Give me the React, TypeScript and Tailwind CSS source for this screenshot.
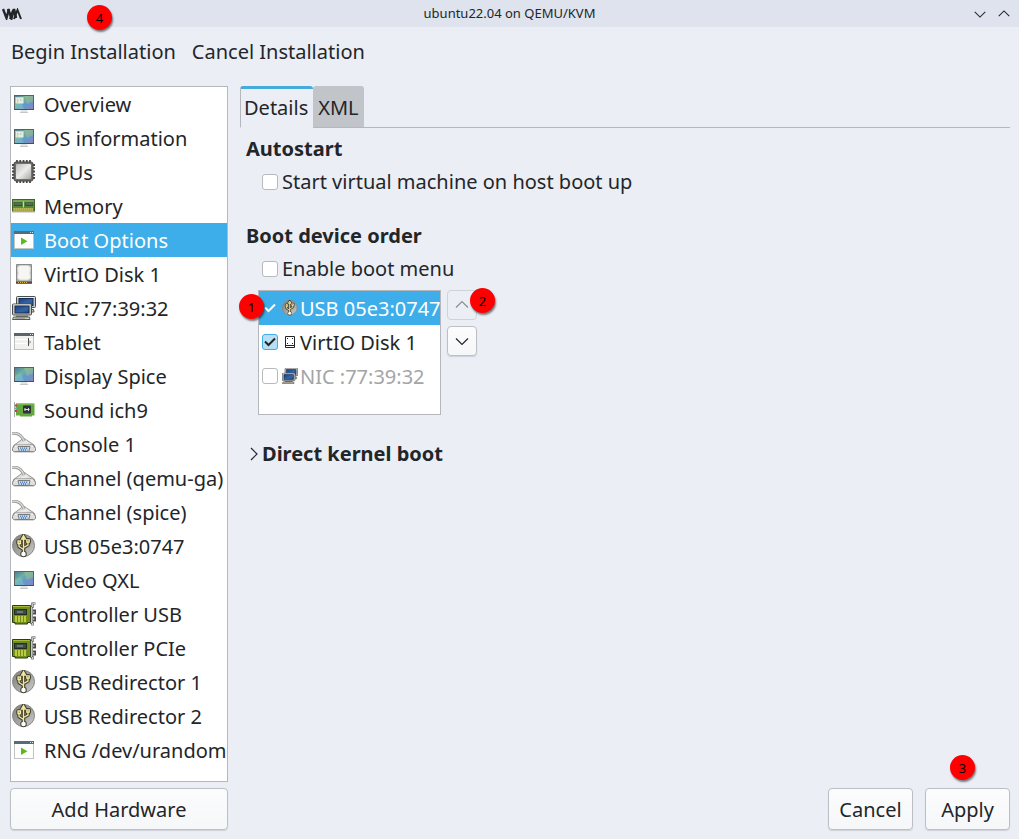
import { useState } from 'react'
import type { ReactNode } from 'react'
import clsx from 'clsx'

type IconName =
  | 'system'
  | 'cpu'
  | 'memory'
  | 'boot'
  | 'disk'
  | 'nic'
  | 'tablet'
  | 'display'
  | 'sound'
  | 'serial'
  | 'usb'
  | 'controller'

interface Hardware {
  name: string
  icon: IconName
}

const HARDWARE: Hardware[] = [
  { name: 'Overview', icon: 'system' },
  { name: 'OS information', icon: 'system' },
  { name: 'CPUs', icon: 'cpu' },
  { name: 'Memory', icon: 'memory' },
  { name: 'Boot Options', icon: 'boot' },
  { name: 'VirtIO Disk 1', icon: 'disk' },
  { name: 'NIC :77:39:32', icon: 'nic' },
  { name: 'Tablet', icon: 'tablet' },
  { name: 'Display Spice', icon: 'display' },
  { name: 'Sound ich9', icon: 'sound' },
  { name: 'Console 1', icon: 'serial' },
  { name: 'Channel (qemu-ga)', icon: 'serial' },
  { name: 'Channel (spice)', icon: 'serial' },
  { name: 'USB 05e3:0747', icon: 'usb' },
  { name: 'Video QXL', icon: 'display' },
  { name: 'Controller USB', icon: 'controller' },
  { name: 'Controller PCIe', icon: 'controller' },
  { name: 'USB Redirector 1', icon: 'usb' },
  { name: 'USB Redirector 2', icon: 'usb' },
  { name: 'RNG /dev/urandom', icon: 'boot' },
]

// Gradients shared by every icon on the page
function IconDefs() {
  return (
    <svg className="absolute size-0" aria-hidden="true">
      <defs>
        <linearGradient id="screen" x1="0" y1="0" x2="1" y2="1">
          <stop offset="0" stopColor="#4f8099" />
          <stop offset="0.35" stopColor="#6fb0a2" />
          <stop offset="0.6" stopColor="#5f9bd0" />
          <stop offset="1" stopColor="#8a87b8" />
        </linearGradient>
        <linearGradient id="silver" x1="0" y1="0" x2="1" y2="1">
          <stop offset="0" stopColor="#bdbdbb" />
          <stop offset="0.5" stopColor="#ececeb" />
          <stop offset="1" stopColor="#a8a8a6" />
        </linearGradient>
        <linearGradient id="ball" x1="0" y1="0" x2="1" y2="1">
          <stop offset="0" stopColor="#7e7e7c" />
          <stop offset="0.6" stopColor="#a9a9a7" />
          <stop offset="1" stopColor="#d2d2d0" />
        </linearGradient>
        <linearGradient id="blue" x1="0" y1="0" x2="1" y2="1">
          <stop offset="0" stopColor="#1c3f7c" />
          <stop offset="0.6" stopColor="#3465a4" />
          <stop offset="1" stopColor="#1f4584" />
        </linearGradient>
      </defs>
    </svg>
  )
}

const MONITOR = (
  <>
    <path d="M9 18h6l1 2.5H8z" fill="#e2e2e2" />
    <path d="M8 20.5h8" stroke="#c6c9c9" />
    <rect x="2" y="3" width="20" height="15" fill="#5b6264" />
    <rect x="3" y="4" width="18" height="13" fill="url(#screen)" />
    <path d="M12 4h9v5l-6 3z" fill="#a8c47c" opacity="0.5" />
    <path d="M3 12l6-3 3 8H3z" fill="#8bd0c4" opacity="0.4" />
    <path d="M2 17.5h20" stroke="#4a5052" />
  </>
)

const COMPUTER = (
  <>
    <rect x="0.5" y="0.5" width="19" height="11" rx="1" fill="#c9c8c0" stroke="#4d4e4b" />
    <path d="M1.5 1.500h17" stroke="#eeeeec" />
    <rect x="3" y="2.500" width="14" height="7" fill="url(#blue)" stroke="#152e5c" />
    <path d="M4 12h12v1.500H4z" fill="#77776f" />
    <path d="M1.500 13.500h16l.500 2.500H.5z" fill="#d3d2ca" stroke="#55564f" />
    <path d="M3 14.800h10" stroke="#85867d" strokeWidth="0.8" />
  </>
)

const TRIDENT = (
  <>
    <path d="M11.5 3v15M11.5 15.5L7 12.5V8.5M11.5 13.5l4.5-2.5V7.5" />
    <path d="M11.5 1.5l2 3.5h-4zM6 7h2.5v2.5H6zM14.8 5.8h2.4v2.4h-2.4z" />
  </>
)

const DRAWINGS: Record<IconName, ReactNode> = {
  system: (
    <>
      {MONITOR}
      <rect x="3.5" y="5" width="8" height="6.5" fill="#e8eedf" />
      <path d="M3.5 5.5h8" stroke="#c3d3cf" />
      <path d="M5 8h1.5M8 8h1.5M5 10h1" stroke="#9fb39a" />
    </>
  ),
  cpu: (
    <>
      <path
        d="M5 0v23M8.200 0v23M11.500 0v23M14.800 0v23M18 0v23M0 5h23M0 8.200h23M0 11.500h23M0 14.800h23M0 18h23"
        stroke="#4b4b49"
        strokeWidth="1.800"
      />
      <rect x="2" y="2" width="19" height="19" rx="2" fill="#6f6f6d" stroke="#464644" />
      <rect x="4" y="4" width="15" height="15" rx="1" fill="url(#silver)" />
    </>
  ),
  memory: (
    <>
      <path d="M0 18.5h23" stroke="#d9d9d6" />
      <rect x="0.5" y="5.5" width="22" height="11.5" fill="#578a3b" stroke="#3e662a" />
      <path d="M1 7h21" stroke="#9cc07c" />
      <path d="M2 8.5h8V12H2zM13 8.5h8V12h-8z" fill="#3b4a38" />
      <path d="M2.5 10h7M13.5 10h7" stroke="#87a08a" strokeWidth="0.8" />
      <path d="M11.5 7.5v6" stroke="#c5dca7" />
      <path d="M1.5 15.5h20" stroke="#e1cb65" strokeWidth="3" strokeDasharray="1.2 0.8" />
    </>
  ),
  boot: (
    <>
      <rect x="2.5" y="4.5" width="19" height="16" fill="#fff" stroke="#c2c4c4" />
      <rect x="2" y="3" width="20" height="3" fill="#526d7c" />
      <path d="M18 4.5h1M20 4.5h1" stroke="#d7e1e6" />
      <path d="M9 9.5l6.5 3.8L9 17z" fill="#5cbb1c" />
    </>
  ),
  disk: (
    <>
      <path d="M4.5 2.5h15v19h-15z" fill="#a9aaa8" stroke="#8b8c8a" />
      <path
        d="M5.500 6a3 3 0 0 1 3-2.500h7a3 3 0 0 1 3 2.500l-.5 5 .5 4.500a3 3 0 0 1-3 2.500h-7a3 3 0 0 1-3-2.500l.5-4.500z"
        fill="#f6f6f4"
        stroke="#d4d4d1"
      />
      <path d="M4 20.500h16" stroke="#484947" strokeWidth="2" />
      <path d="M6 20.500h9" stroke="#ddb64c" strokeDasharray="1 1" />
    </>
  ),
  nic: (
    <>
      <g transform="translate(4 0)">{COMPUTER}</g>
      <g transform="translate(0 7.500)">{COMPUTER}</g>
    </>
  ),
  tablet: (
    <>
      <rect x="2.5" y="4.5" width="19" height="15" fill="#f1f1f0" stroke="#bcbebe" />
      <rect x="2" y="3" width="20" height="3" fill="#5a656b" />
      <path d="M18 4.5h1M20 4.5h1" stroke="#d7e1e6" />
      <path d="M3 9.5h18M3 13.5h12" stroke="#fff" />
      <path d="M16.500 8v8" stroke="#4e5254" />
      <path d="M17.500 10l1.500 2-1.500 2" fill="#8a8d8e" />
    </>
  ),
  display: MONITOR,
  sound: (
    <>
      <path d="M2.5 4v15" stroke="#a8aaa6" />
      <path d="M4 5.5h18.500v12H20v1H8v-1H4z" fill="#64a83f" />
      <path d="M4 6h18" stroke="#84c15e" />
      <path d="M3 7.500h2M3 13h2" stroke="#d13b3b" strokeWidth="2" />
      <path d="M3 10.500h2" stroke="#4dbcb0" strokeWidth="2" />
      <rect x="11" y="7.500" width="8" height="8" rx="1" fill="#2c3532" />
      <path d="M13 10v3M16.500 10v3M12.500 11.500h5" stroke="#d5ddd8" />
    </>
  ),
  serial: (
    <>
      <path d="M9 8c1.500-2 4-2 5.500 0l7 4.500c1 .8 1.500 2 1.500 4H1c0-2 .5-3.200 2-4z" fill="url(#silver)" stroke="#989997" />
      <path d="M0 1.500c6-1.200 9.500 1.500 12 7.500" fill="none" stroke="#9b9c9a" strokeWidth="3" />
      <path d="M0 1.300c6-1.200 9.500 1.500 12 7.500" fill="none" stroke="#deded9" strokeWidth="1.200" />
      <path d="M2.500 13h19l2 3.500v1.500c0 1-.8 1.500-2 1.500h-19c-1.200 0-2-.5-2-1.500v-1.500z" fill="#dfdfdd" stroke="#828381" />
      <path d="M3 14h18" stroke="#fff" />
      <path d="M6 14.500h12l-1.200 5H7.200z" fill="#d4deea" stroke="#777b80" />
      <path d="M8 16.200h8M8.800 18h6.500" stroke="#3f73b5" strokeWidth="1.300" strokeDasharray="1.200 0.800" />
      <path d="M2 20.500h20" stroke="#d8d8d6" />
    </>
  ),
  usb: (
    <>
      <circle cx="11.5" cy="11.5" r="11" fill="url(#ball)" stroke="#858583" />
      <g fill="none" stroke="#45432f" strokeWidth="3.5" strokeLinejoin="round">
        {TRIDENT}
        <circle cx="11.5" cy="20" r="1.5" />
      </g>
      <g fill="none" stroke="#f4e9a3" strokeWidth="1.3">
        {TRIDENT}
      </g>
      <circle cx="11.5" cy="20" r="2.300" fill="#fff" />
    </>
  ),
  controller: (
    <>
      <path d="M.5 3.500h18v17h-3V22H3v-1.500H.5z" fill="#71901b" stroke="#2f3d10" />
      <path d="M1 4.500h17" stroke="#a5bd3f" />
      <path d="M4 14v6M7 14v6M10 14v6M13 14v6" stroke="#d3e04c" strokeWidth="1.500" />
      <rect x="2.500" y="7.500" width="12" height="5" fill="#3f4c46" stroke="#232b22" />
      <path d="M5 10h6" stroke="#96a6a4" />
      <path d="M23.500 1.500H20.500V5h-1v16h1v2.500M21 8.500h2.500v3H21M21 15.500h2.500v3H21" fill="none" stroke="#4b4d4a" strokeWidth="2.200" />
      <path d="M23.500 1.500H20.500V5h-1v16h1v2.500" fill="none" stroke="#d6d7d3" strokeWidth="0.900" />
    </>
  ),
}

function DeviceIcon({ name, className }: { name: IconName; className: string }) {
  return (
    <svg viewBox="0 0 24 24" className={clsx('shrink-0', className)} aria-hidden="true">
      {DRAWINGS[name]}
    </svg>
  )
}

// Outline disk used at the small list size
function SmallDiskIcon() {
  return (
    <svg viewBox="0 0 16 16" className="size-4 shrink-0" fill="none" stroke="#232629" aria-hidden="true">
      <path d="M3.500 2.500h9v11h-9zM3.500 11.500h9" />
      <path d="M5 4.500h1M10 4.500h1M5 9.500h1M10 9.500h1" />
    </svg>
  )
}

function Chevron({ d, className }: { d: string; className: string }) {
  return (
    <svg viewBox="0 0 16 16" className={clsx('shrink-0', className)} fill="none" stroke="currentColor" strokeWidth="1.2" aria-hidden="true">
      <path d={d} />
    </svg>
  )
}

const UP = 'M2 10.5l6-6 6 6'
const DOWN = 'M2 5.5l6 6 6-6'
const RIGHT = 'M5 2l6 6-6 6'

function Badge({ children, className }: { children: ReactNode; className: string }) {
  return (
    <span
      className={clsx(
        'absolute z-10 flex size-[25px] items-center justify-center rounded-full bg-[#ff0000] text-[13px] text-black shadow-[1px_2px_2px_rgba(0,0,0,0.5)]',
        className,
      )}
    >
      {children}
    </span>
  )
}

interface CheckProps {
  id: string
  checked: boolean
  onChange: () => void
  highlighted?: boolean
}

function Check({ id, checked, onChange, highlighted }: CheckProps) {
  return (
    <span className="grid size-4 shrink-0">
      <input
        id={id}
        type="checkbox"
        checked={checked}
        onChange={onChange}
        className={clsx(
          'size-4 appearance-none rounded-[3px] border [grid-area:1/1]',
          highlighted ? 'border-transparent' : checked ? 'border-[#3daee9] bg-[#b9dff4]' : 'border-[#b6b9bd] bg-white',
        )}
      />
      {checked && (
        <svg
          viewBox="0 0 16 16"
          className={clsx('pointer-events-none size-4 [grid-area:1/1]', highlighted ? 'text-white' : 'text-[#232629]')}
          fill="none"
          stroke="currentColor"
          strokeWidth="2"
          aria-hidden="true"
        >
          <path d="M3 7.5L6.500 11 13 4.500" />
        </svg>
      )}
    </span>
  )
}

const BUTTON = 'rounded border border-[#bcbfc3] bg-linear-to-b from-[#fcfcfd] to-[#f6f7f9] shadow-[0_1px_1px_rgba(0,0,0,0.12)]'
const TEXT_BUTTON = clsx(BUTTON, 'h-[42px] pt-[2px]')

const BOOT_DEVICES: Hardware[] = [
  { name: 'USB 05e3:0747', icon: 'usb' },
  { name: 'VirtIO Disk 1', icon: 'disk' },
  { name: 'NIC :77:39:32', icon: 'nic' },
]

export default function App() {
  const [selected, setSelected] = useState('Boot Options')
  const [tab, setTab] = useState('Details')
  const [autostart, setAutostart] = useState(false)
  const [bootMenu, setBootMenu] = useState(false)
  const [enabled, setEnabled] = useState([true, true, false])

  const toggleDevice = (index: number) => setEnabled(enabled.map((on, i) => (i === index ? !on : on)))

  return (
    <div className="relative flex min-h-screen flex-col bg-[#ebeef5] font-['Noto_Sans',sans-serif] text-xl leading-7 text-[#232629]">
      <IconDefs />

      {/* Title bar */}
      <header className="relative grid h-[27px] grid-cols-[1fr_auto_1fr] items-center bg-[#dee3ed]">
        <svg viewBox="0 0 20 12" className="ml-[2px] h-3 w-5" fill="none" stroke="#232629" aria-hidden="true">
          <path d="M1 1l3.500 9L7 1" strokeWidth="2.400" />
          <path d="M6 1l3.500 9L12 1l2 9" strokeWidth="2.600" />
          <path d="M8 11l3-9M12 11l3.500-9L19 11" strokeWidth="2" />
        </svg>
        <h1 className="pb-[2px] text-[13px] leading-5">ubuntu22.04 on QEMU/KVM</h1>
        <div className="flex justify-end gap-2 pr-[7px]">
          <button aria-label="Minimize" className="flex size-4 items-center justify-center">
            <Chevron d={DOWN} className="size-[14px]" />
          </button>
          <button aria-label="Maximize" className="flex size-4 items-center justify-center">
            <Chevron d={UP} className="size-[14px]" />
          </button>
        </div>
        <Badge className="left-[87px] top-[5px]">4</Badge>
      </header>

      {/* Toolbar */}
      <nav className="flex gap-4 px-[11px] pb-5 pt-[11px]">
        <button>Begin Installation</button>
        <button>Cancel Installation</button>
      </nav>

      <div className="flex flex-1 gap-3 pb-[9px] pl-[10px] pr-[9px]">
        {/* Hardware list */}
        <aside className="flex w-[218px] shrink-0 flex-col gap-[6px]">
          <ul className="flex-1 border border-[#b4b8bc] bg-white">
            {HARDWARE.map(({ name, icon }) => (
              <li key={name}>
                <button
                  onClick={() => setSelected(name)}
                  className={clsx(
                    'flex h-[34px] w-full items-center gap-2 whitespace-nowrap pl-px text-left',
                    selected === name && 'bg-[#3daee9] text-white',
                  )}
                >
                  <DeviceIcon name={icon} className="size-6" />
                  <span className="pt-[2px]">{name}</span>
                </button>
              </li>
            ))}
          </ul>
          <button className={TEXT_BUTTON}>Add Hardware</button>
        </aside>

        <main className="flex min-w-0 flex-1 flex-col">
          <div role="tablist" className="flex h-[42px]">
            {['Details', 'XML'].map(name => (
              <button
                key={name}
                role="tab"
                aria-selected={tab === name}
                onClick={() => setTab(name)}
                className={clsx(
                  'rounded-t-[3px] border-b border-t-3',
                  tab === name
                    ? 'border-l border-b-transparent border-l-[#b4b8bc] border-t-[#48aadb] pl-[3px] pr-[5px]'
                    : 'border-b-[#b4b8bc] border-t-[#c1c5ca] bg-[#c1c5ca] px-[5px]',
                )}
              >
                {name}
              </button>
            ))}
            <div className="flex-1 border-b border-[#b4b8bc]" />
          </div>

          <div className="flex flex-1 flex-col items-start px-[6px] pt-[7px]">
            <h2 className="font-bold">Autostart</h2>
            <div className="mt-[5px] flex items-center gap-1 pl-4">
              <Check id="autostart" checked={autostart} onChange={() => setAutostart(!autostart)} />
              <label htmlFor="autostart">Start virtual machine on host boot up</label>
            </div>

            <h2 className="mt-[26px] font-bold">Boot device order</h2>
            <div className="mt-[5px] flex items-center gap-1 pl-4">
              <Check id="boot-menu" checked={bootMenu} onChange={() => setBootMenu(!bootMenu)} />
              <label htmlFor="boot-menu">Enable boot menu</label>
            </div>

            <div className="mt-[7px] flex gap-[6px] pl-3">
              <ul className="h-[125px] w-[183px] border border-[#b4b8bc] bg-white">
                {BOOT_DEVICES.map(({ name, icon }, i) => (
                  <li
                    key={name}
                    className={clsx(
                      'relative flex h-[34px] items-center gap-1 whitespace-nowrap pl-[3px]',
                      i === 0 && 'bg-[#3daee9] text-white',
                      !enabled[i] && 'text-[#a3a5a7]',
                    )}
                  >
                    <Check id={`boot-${i}`} checked={enabled[i]} onChange={() => toggleDevice(i)} highlighted={i === 0} />
                    <label htmlFor={`boot-${i}`} className="flex items-center gap-[2px]">
                      {icon === 'disk' ? <SmallDiskIcon /> : <DeviceIcon name={icon} className="size-4" />}
                      <span className="pt-[2px]">{name}</span>
                    </label>
                    {i === 0 && <Badge className="-left-5 top-[3px]">1</Badge>}
                  </li>
                ))}
              </ul>
              <div className="flex flex-col gap-[6px]">
                <div className="relative">
                  <button
                    disabled
                    aria-label="Move up"
                    className="flex size-[30px] items-center justify-center rounded border border-[#cfd2d8] text-[#8b8e92]"
                  >
                    <Chevron d={UP} className="size-4" />
                  </button>
                  <Badge className="-top-[2px] left-[23px]">2</Badge>
                </div>
                <button aria-label="Move down" className={clsx(BUTTON, 'flex size-[30px] items-center justify-center')}>
                  <Chevron d={DOWN} className="size-4" />
                </button>
              </div>
            </div>

            <button aria-expanded="false" className="mt-[25px] flex items-center font-bold">
              <Chevron d={RIGHT} className="size-4" />
              Direct kernel boot
            </button>
          </div>

          <div className="flex justify-end gap-3">
            <button className={clsx(TEXT_BUTTON, 'w-[85px]')}>Cancel</button>
            <div className="relative">
              <button className={clsx(TEXT_BUTTON, 'w-[85px]')}>Apply</button>
              <Badge className="-top-[33px] left-[25px]">3</Badge>
            </div>
          </div>
        </main>
      </div>
    </div>
  )
}
